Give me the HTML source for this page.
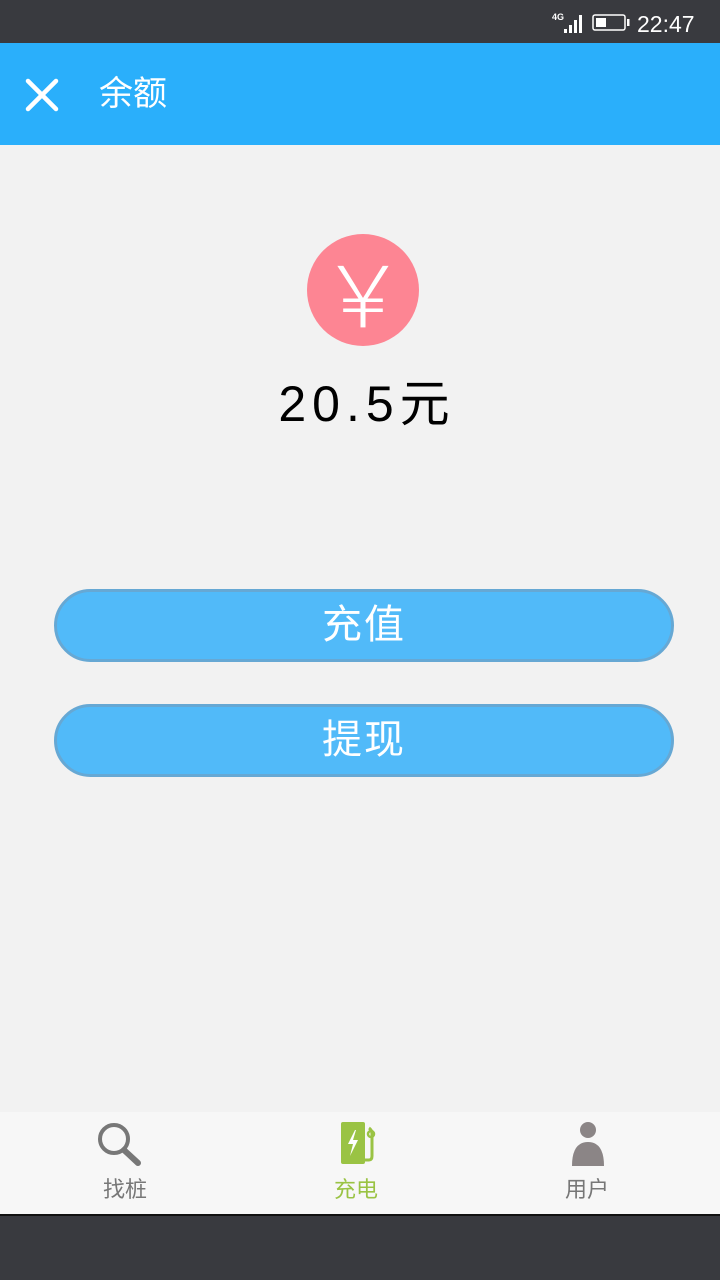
<!DOCTYPE html>
<html><head><meta charset="utf-8"><style>
*{margin:0;padding:0;box-sizing:border-box}
body{width:720px;height:1280px;background:#f2f2f2;font-family:"Liberation Sans","Noto Sans CJK SC",sans-serif;position:relative;overflow:hidden}
.sb{position:absolute;top:0;left:0;width:720px;height:43px;background:#393a3f}
.hd{position:absolute;top:43px;left:0;width:720px;height:102px;background:#2aaffb}
.title{position:absolute;left:99px;top:72px;color:#fff;font-size:34px;line-height:44px}
.coin{position:absolute;left:307px;top:234px;width:112px;height:112px;border-radius:50%;background:#fd8593;color:#fff;font-size:86px;line-height:112px;text-align:center;font-family:"Noto Sans CJK SC",sans-serif;font-weight:300}
.amt{position:absolute;left:0;width:720px;top:372px;text-align:center;font-size:50px;line-height:64px;color:#000;letter-spacing:6px;padding-left:14px}
.btn{position:absolute;left:54px;width:620px;height:73px;border-radius:37px;background:#51baf9;border:3px solid #66a8d4;color:#fff;font-size:40px;line-height:66px;text-align:center;letter-spacing:2px}
.tb{position:absolute;top:1112px;left:0;width:720px;height:102px;background:#f7f7f7}
.nb{position:absolute;top:1214px;left:0;width:720px;height:66px;background:#393a3f;border-top:2px solid #111}
.tl{position:absolute;top:1175px;font-size:22px;line-height:30px;width:100px;text-align:center}
</style></head><body>
<div class="sb">
<span style="position:absolute;left:552px;top:12px;color:#fff;font-size:9px;font-weight:bold">4G</span>
<svg style="position:absolute;left:562px;top:14px" width="22" height="20"><rect x="2" y="15" width="3" height="4" fill="#fff"/><rect x="7" y="11" width="3" height="8" fill="#fff"/><rect x="12" y="6" width="3" height="13" fill="#fff"/><rect x="17" y="1" width="3" height="18" fill="#fff"/></svg>
<svg style="position:absolute;left:592px;top:14px" width="40" height="18"><rect x="1" y="1" width="32" height="15" rx="2" fill="none" stroke="#fff" stroke-width="1.5"/><rect x="4" y="4" width="10" height="9" fill="#fff"/><rect x="35" y="5" width="2.5" height="7" fill="#fff"/></svg>
<span style="position:absolute;left:637px;top:9px;color:#fff;font-size:23px;line-height:30px">22:47</span>
</div>
<div class="hd"></div>
<svg style="position:absolute;left:25px;top:78px" width="34" height="34"><path d="M3 3L31 31M31 3L3 31" stroke="#fff" stroke-width="4.5" stroke-linecap="round"/></svg>
<div class="title">余额</div>
<div class="coin">￥</div>
<div class="amt">20.5元</div>
<div class="btn" style="top:589px">充值</div>
<div class="btn" style="top:704px">提现</div>
<div class="tb"></div>
<svg style="position:absolute;left:96px;top:1121px" width="48" height="46"><circle cx="18" cy="18" r="14" fill="none" stroke="#777" stroke-width="4"/><path d="M28 29L42 42" stroke="#777" stroke-width="6" stroke-linecap="round"/></svg>
<svg style="position:absolute;left:338px;top:1120px" width="44" height="46"><rect x="3" y="2" width="24" height="42" rx="2" fill="#9ac344"/><path d="M17 10L10 24H15L12 36L20 20H15L18 10Z" fill="#fff"/><path d="M27 40H31Q34 40 34 36V14Q34 10 31 8" fill="none" stroke="#9ac344" stroke-width="3"/><circle cx="33" cy="14" r="3" fill="none" stroke="#9ac344" stroke-width="2.5"/></svg>
<svg style="position:absolute;left:568px;top:1122px" width="40" height="46"><circle cx="20" cy="8" r="8" fill="#8b8586"/><path d="M4 44Q4 20 20 20Q36 20 36 44Z" fill="#8b8586"/></svg>
<div class="tl" style="left:75px;color:#777">找桩</div>
<div class="tl" style="left:306px;color:#9ac344">充电</div>
<div class="tl" style="left:537px;color:#777">用户</div>
<div class="nb"></div>
</body></html>
